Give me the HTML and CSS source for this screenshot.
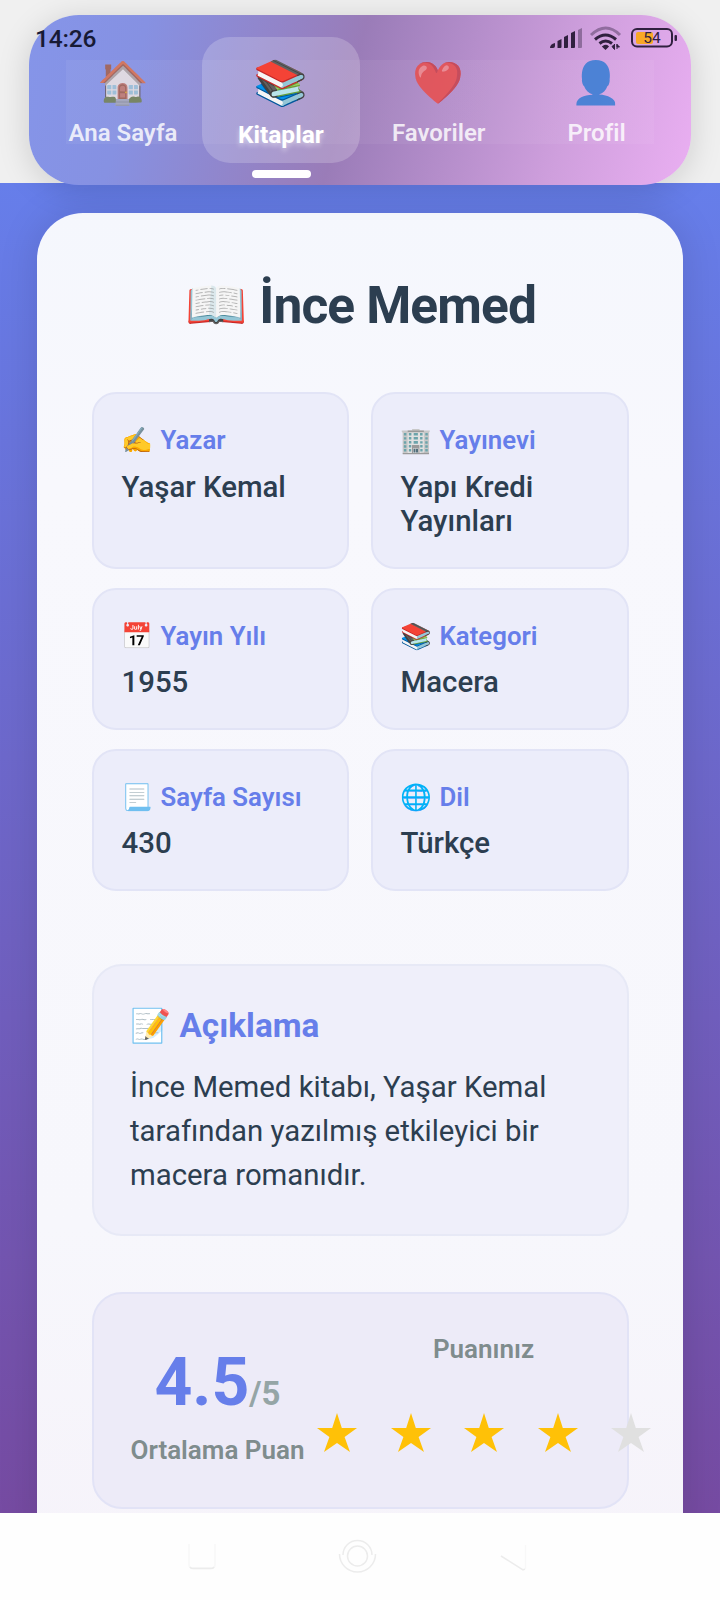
FILE: index.html
```
<!DOCTYPE html>
<html lang="tr">
<head>
<meta charset="utf-8">
<title>İnce Memed</title>
<link rel="stylesheet" href="styles.css">
</head>
<body>
<div class="screen">
  <header class="top">
    <div class="status">
      <span class="clock">14:26</span>
      <svg class="status-icons" width="130" height="28" viewBox="0 0 130 28">
        <g fill="#30203f">
          <path d="M2 23q0-4 5-5v3q0 2-2 2z"/><path d="M9.500 16l4-2v8q0 1-1 1h-3z"/><path d="M16 12l4-2v12q0 1-1 1h-3z"/><path d="M23 8l4-2v16q0 1-1 1h-3z"/>
          <path d="M30 5l4-2v19q0 1-1 1h-3z" opacity=".4"/>
        </g>
        <g fill="none" stroke="#30203f" stroke-width="3">
          <path d="M43 10q15-14 29 0" opacity=".4"/><path d="M47 14.500q10.500-9 21 0"/><path d="M51.500 18.500q6-5 12.500 0"/>
        </g>
        <path d="M55 21.500q3-2 5 0l-2.500 2.500z" fill="#30203f" stroke="#30203f" stroke-width="1.500"/>
        <path d="M64 21.500l2.500-2v5zM66.500 19v5M69 19.500l2.500 2.500h-2.500zM69 19v5" fill="#30203f" stroke="#30203f"/>
        <rect x="84" y="4" width="40" height="17.500" rx="5" fill="none" stroke="#30203f" stroke-width="2"/>
        <rect x="88" y="7" width="17" height="12" rx="2" fill="#f9a825"/>
        <rect x="126.500" y="10" width="2.500" height="6" rx="1" fill="#30203f"/>
        <text x="104" y="18" class="battery">54</text>
      </svg>
    </div>
    <nav class="nav">
      <div class="tab"><span class="tab-icon">🏠</span><span class="tab-label">Ana Sayfa</span></div>
      <div class="tab active"><span class="tab-icon">📚</span><span class="tab-label">Kitaplar</span></div>
      <div class="tab"><span class="tab-icon">❤️</span><span class="tab-label">Favoriler</span></div>
      <div class="tab"><span class="tab-icon">👤</span><span class="tab-label">Profil</span></div>
    </nav>
  </header>
  <main class="page">
    <article class="book">
      <h1 class="title"><span class="title-icon">📖</span><span>İnce Memed</span></h1>
      <section class="grid">
        <div class="info"><div class="label"><span class="emoji">✍️</span>Yazar</div><div class="value">Yaşar Kemal</div></div>
        <div class="info"><div class="label"><span class="emoji">🏢</span>Yayınevi</div><div class="value">Yapı Kredi Yayınları</div></div>
        <div class="info"><div class="label"><span class="emoji">📅</span>Yayın Yılı</div><div class="value">1955</div></div>
        <div class="info"><div class="label"><span class="emoji">📚</span>Kategori</div><div class="value">Macera</div></div>
        <div class="info"><div class="label"><span class="emoji">📃</span>Sayfa Sayısı</div><div class="value">430</div></div>
        <div class="info"><div class="label"><span class="emoji">🌐</span>Dil</div><div class="value">Türkçe</div></div>
      </section>
      <section class="about">
        <h2 class="about-title"><span class="about-icon">📝</span>Açıklama</h2>
        <p class="about-text">İnce Memed kitabı, Yaşar Kemal tarafından yazılmış etkileyici bir macera romanıdır.</p>
      </section>
      <section class="rating">
        <div class="average">
          <div class="score">4.5<span class="outof">/5</span></div>
          <div class="caption">Ortalama Puan</div>
        </div>
        <div class="yours">
          <div class="caption">Puanınız</div>
          <div class="stars">
            <svg class="star" viewBox="0 0 40 39"><path d="M20 0l4.800 15H40L27.600 24l5.400 15L20 30 7 39l5.400-15L0 15h15.200z"/></svg>
            <svg class="star" viewBox="0 0 40 39"><path d="M20 0l4.800 15H40L27.600 24l5.400 15L20 30 7 39l5.400-15L0 15h15.200z"/></svg>
            <svg class="star" viewBox="0 0 40 39"><path d="M20 0l4.800 15H40L27.600 24l5.400 15L20 30 7 39l5.400-15L0 15h15.200z"/></svg>
            <svg class="star" viewBox="0 0 40 39"><path d="M20 0l4.800 15H40L27.600 24l5.400 15L20 30 7 39l5.400-15L0 15h15.200z"/></svg>
            <svg class="star empty" viewBox="0 0 40 39"><path d="M20 0l4.800 15H40L27.600 24l5.400 15L20 30 7 39l5.400-15L0 15h15.200z"/></svg>
          </div>
        </div>
      </section>
    </article>
  </main>
  <footer class="system">
    <svg width="720" height="87" viewBox="0 1 720 87" fill="none" stroke="#ececec" stroke-width="1.500">
      <path d="M189 32v21q0 3 3 3h20q3 0 3-3V32" stroke="#f8f8f8"/><path d="M190 55q1 1.500 3 1.500h18q2 0 3-1.500"/>
      <path d="M343 43a14.500 14.500 0 1 1 29 0"/><circle cx="357.500" cy="44" r="10"/><path d="M339.500 42a18 18 0 0 0 36 0"/>
      <path d="M501 44l22 14 2-1"/><path d="M525.500 33v24" stroke="#f8f8f8"/>
    </svg>
  </footer>
</div>
</body>
</html>
```
FILE: styles.css
```
* { box-sizing: border-box; }
body { margin: 0; font-family: Roboto, "Noto Color Emoji", sans-serif; color: #2c3e50; }
h1, h2, p { margin: 0; }
.screen { width: 720px; height: 1600px; display: flex; flex-direction: column; overflow: hidden; position: relative; }
.top { height: 183px; flex: none; background: #f0f0f0; padding: 14.500px 29.500px 0 29px; position: relative; z-index: 1; }
.nav {
  height: 170px; border-radius: 50px; padding: 22.500px 15px 0; display: grid; grid-template-columns: repeat(4, 1fr); align-items: start;
  background: linear-gradient(rgba(255,255,255,.05), rgba(255,255,255,.05)) 37px 45.500px / 588px 84px no-repeat,
    linear-gradient(105deg, #8595e9 0%, #8691e2 17%, #9a7cb8 48%, #cf9fdd 80%, #eaaff2 100%);
  box-shadow: 0 5px 32px rgba(0,0,0,.15);
}
.tab { height: 126px; border-radius: 28px; display: flex; flex-direction: column; align-items: center; padding-top: 18px; color: rgba(255,255,255,.82); position: relative; }
.tab-icon { font-size: 41.500px; line-height: 56px; height: 56px; opacity: .88; }
.tab-label { font-size: 24px; line-height: 28px; margin-top: 7.500px; font-weight: 600; white-space: nowrap; }
.active { background: rgba(255,255,255,.2); color: #fff; }
.active .tab-icon { font-size: 44px; opacity: 1; }
.active .tab-label { margin-top: 10px; font-size: 24.500px; font-weight: 700; text-shadow: 0 3px 5px rgba(255,255,255,.45); }
.active::after { content: ""; position: absolute; bottom: -15px; left: 50px; width: 59px; height: 8px; border-radius: 4px; background: #fff; }
.status { position: absolute; left: 35px; right: 42px; top: 25px; height: 28px; z-index: 2; display: flex; justify-content: space-between; }
.clock { font-size: 24.500px; line-height: 28px; font-weight: 500; letter-spacing: -.2px; color: #171a35; }
.battery { font: 400 15.500px Roboto, sans-serif; fill: #30203f; text-anchor: middle; }
.page { height: 1330px; flex: none; padding: 30px 37px 0; overflow: hidden; background: linear-gradient(#667eea, #764ba2); }
.book { height: 1350px; border-radius: 46px; background: linear-gradient(#f5f7fd, #f8f8fd 20%, #f7f7fc 75%, #f6f3fa); padding: 60px 54px 0 55px; box-shadow: 0 0 40px rgba(0,0,0,.12); }
.title { height: 64px; display: flex; justify-content: center; align-items: center; gap: 12px; font-size: 51.500px; font-weight: 700; letter-spacing: -.9px; white-space: nowrap; }
.title-icon { font-size: 50px; font-weight: 400; letter-spacing: 0; line-height: 60px; }
.grid { margin-top: 55px; display: grid; grid-template-columns: 257px 257.500px; column-gap: 22px; row-gap: 19px; grid-template-rows: 176.500px 142px 142px; }
.info { background: #ecedfa; border: 2px solid #e2e4f6; border-radius: 24px; padding: 29px 27.500px 0; }
.label { display: flex; height: 34px; line-height: 34px; font-size: 25.800px; font-weight: 600; color: #667eea; white-space: nowrap; }
.emoji { width: 39px; font-size: 25.500px; flex: none; }
.value { margin-top: 12.500px; font-size: 29.400px; line-height: 34.500px; font-weight: 500; }
.about { margin-top: 73px; height: 272px; border-radius: 30px; border: 2px solid #e7e9f6; background: #efeffa; padding: 37px 36px 0; }
.about-title { display: flex; height: 46px; line-height: 46px; font-size: 33.300px; font-weight: 700; color: #667eea; }
.about-icon { width: 49.500px; font-size: 33px; font-weight: 400; }
.about-text { margin-top: 16px; font-size: 29.350px; line-height: 44px; }
.rating { margin-top: 56px; height: 217px; border-radius: 30px; border: 2px solid #e2e3f6; background: #edebf8; display: flex; padding-left: 36px; white-space: nowrap; }
.average { width: 175px; flex: none; padding-top: 49px; text-align: center; }
.score { font-size: 66px; line-height: 80px; font-weight: 700; color: #667eea; }
.outof { font-size: 33px; font-weight: 700; color: #95a5a6; }
.caption { font-size: 26px; line-height: 30px; font-weight: 600; color: #7f8c8d; }
.average .caption { margin-top: 1px; }
.yours { width: 334px; flex: none; padding: 40.500px 0 0 12px; text-align: center; }
.yours .caption { padding-left: 11px; }
.stars { display: flex; gap: 33.500px; margin-top: 48.500px; }
.star { width: 40px; height: 39px; flex: none; fill: #ffc107; }
.empty { fill: #e0e0e0; }
.system { height: 87px; flex: none; background: #fefefe; }
.system svg { display: block; }
```
